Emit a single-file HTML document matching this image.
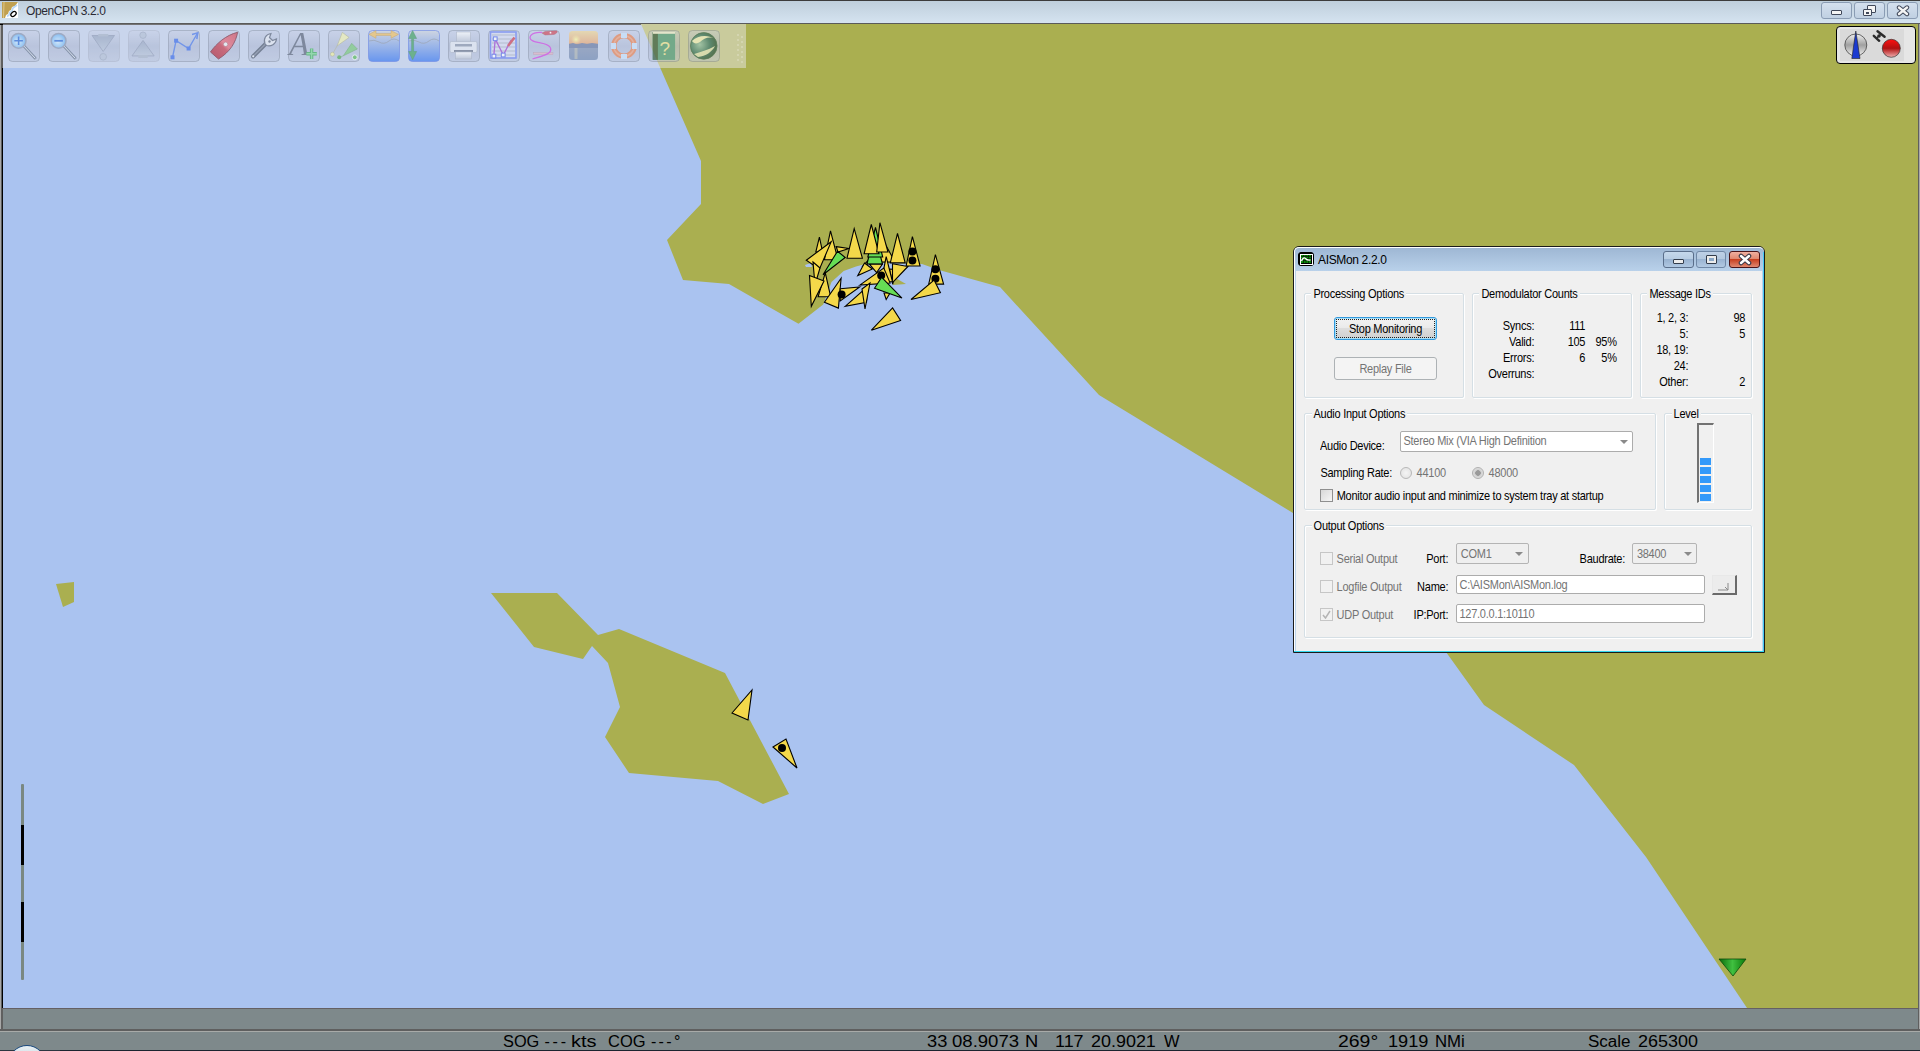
<!DOCTYPE html>
<html><head><meta charset="utf-8">
<style>
*{margin:0;padding:0;box-sizing:border-box}
html,body{width:1920px;height:1051px;overflow:hidden;background:#7e898b;font-family:"Liberation Sans",sans-serif}
.a{position:absolute}
#title{left:0;top:0;width:1920px;height:24px;background:linear-gradient(#bfcfdc,#d6e4f1);border-top:1px solid #3c3c3c}
#title .t{left:26px;top:3px;font-size:12px;color:#2a2a34;letter-spacing:-0.4px}
svg{position:absolute;left:0;top:0}
.st{font-size:16px;color:#000;top:1033px;white-space:pre;transform:scaleX(1.12);transform-origin:0 0}
.dl{font-size:11px;letter-spacing:-0.26px;color:#000;white-space:pre;line-height:13px;transform:scaleY(1.12);transform-origin:0 10px}
.gb{position:absolute;border:1px solid #d5dfe5;border-radius:2px;box-shadow:inset 1px 1px 0 #fff,1px 1px 0 #fff}
.gt{position:absolute;background:#f0f0f0;padding:0 2px 0 1px;top:-8px;left:7px}
.gray{color:#747474}
</style></head><body>

<!-- title bar -->
<div id="title" class="a">
  <svg class="a" style="left:2px;top:1px" width="16" height="16"><rect width="16" height="16" fill="#fff"/><path d="M0 0 H16 L14.5 2 L13 4 L10 5 L9 8 L7 9 L6 12 L4 13 L3 16 H0 Z" fill="#c0a050"/><path d="M2 0 L1.5 16" stroke="#f0e0b0" stroke-width="1" opacity="0.6"/><path d="M15 3 L11 6 L10 9 L8 10 L7 13 L5 14.5" stroke="#b8d8f8" stroke-width="1.6" fill="none"/><ellipse cx="11.5" cy="12" rx="3" ry="2" transform="rotate(-40 11.5 12)" fill="none" stroke="#000" stroke-width="1.3"/></svg>
  <div class="a t">OpenCPN 3.2.0</div>
</div>

<!-- map -->
<svg width="1920" height="1051" viewBox="0 0 1920 1051">
  <rect x="0" y="23" width="1920" height="1" fill="#5a5a5a"/>
  <rect x="0" y="24" width="1920" height="985" fill="#a8a8a8"/><rect x="1" y="24" width="2" height="985" fill="#5f5f5f"/><rect x="1918" y="24" width="1" height="985" fill="#5f5f5f"/>
  <rect x="3" y="25" width="1915" height="983" fill="#aac3f0"/>
  <rect x="2" y="68" width="1" height="940" fill="#000"/>
  <rect x="0" y="24" width="641" height="1" fill="#000"/>
  <polygon fill="#aaaf50" points="641,24 1918,24 1918,1008 1747,1008 1646,857 1574,765 1484,705 1446,652 1293,513 1099,395 1000,287 939,270 922,264 871,262.6 856,266.4 843.7,271 831.5,282 823.2,304.5 798.5,323.8 729,284 683,280 667,240 701,204 701,161"/>
  <polygon fill="#aaaf50" points="491,593 557,593 598,635 619,629 725,673 789,794 763,804 718,781 629,773 605,737 620,707 608,663 592,646 583,659 534,647"/>
  <polygon fill="#aaaf50" points="56,584 74,582 74,602 63,607"/>
</svg>
<svg class="a" style="left:0;top:0" width="1920" height="1051" viewBox="0 0 1920 1051">
<polygon points="805,265 811,263 812,267 806,267" fill="#aac3f0"/><polygon points="892,276 906,284 893,285" fill="#aaaf50"/>
<polygon points="819.4,237.2 815.8,252 822.6,252" fill="#f4d84a" stroke="#000" stroke-width="1.1" stroke-linejoin="miter"/>
<polygon points="836.2,246.6 849,248.5 838,252" fill="#f4d84a" stroke="#000" stroke-width="1.1" stroke-linejoin="miter"/>
<polygon points="830.5,230.8 824.4,259.8 838,259.8" fill="#f4d84a" stroke="#000" stroke-width="1.1" stroke-linejoin="miter"/>
<polygon points="854.2,228.6 847,258.2 862.4,258.2" fill="#f4d84a" stroke="#000" stroke-width="1.1" stroke-linejoin="miter"/>
<polygon points="862,267 871,262 876,252" fill="#f4d84a" stroke="#000" stroke-width="1.1" stroke-linejoin="miter"/>
<polygon points="883,240 878,262 895,262" fill="#f4d84a" stroke="#000" stroke-width="1.1" stroke-linejoin="miter"/>
<polygon points="874.5,233 867,264 882.5,264" fill="#66dd55" stroke="#000" stroke-width="1.1" stroke-linejoin="miter"/>
<polygon points="875.5,227.5 867.8,257 882.7,257" fill="#66dd55" stroke="#000" stroke-width="1.1" stroke-linejoin="miter"/>
<polygon points="871.3,224.5 864.1,253.8 879,253.8" fill="#f4d84a" stroke="#000" stroke-width="1.1" stroke-linejoin="miter"/>
<polygon points="879.9,222.7 876.7,252 888,252" fill="#f4d84a" stroke="#000" stroke-width="1.1" stroke-linejoin="miter"/>
<polygon points="806.3,260.2 831.2,241.7 819.4,269.2" fill="#f4d84a" stroke="#000" stroke-width="1.1" stroke-linejoin="miter"/>
<polygon points="837.5,251.2 845.2,257.5 823,274.7" fill="#66dd55" stroke="#000" stroke-width="1.1" stroke-linejoin="miter"/>
<polygon points="813,262 820,268 815,285" fill="#f4d84a" stroke="#000" stroke-width="1.1" stroke-linejoin="miter"/>
<polygon points="818.1,296.8 830.7,296.8 825.3,272.9" fill="#f4d84a" stroke="#000" stroke-width="1.1" stroke-linejoin="miter"/>
<polygon points="809.5,275.6 824,281 811.3,306.3" fill="#f4d84a" stroke="#000" stroke-width="1.1" stroke-linejoin="miter"/>
<polygon points="857.8,275.5 864.5,263 872.4,269" fill="#f4d84a" stroke="#000" stroke-width="1.1" stroke-linejoin="miter"/>
<polygon points="869.5,264.2 882.3,264.3 876.6,272.5" fill="#f4d84a" stroke="#000" stroke-width="1.1" stroke-linejoin="miter"/>
<polygon points="889.5,269 894.7,269.5 892.8,284.3" fill="#f4d84a" stroke="#000" stroke-width="1.1" stroke-linejoin="miter"/>
<polygon points="897.5,233.5 890.3,262.9 905.2,262.9" fill="#f4d84a" stroke="#000" stroke-width="1.1" stroke-linejoin="miter"/>
<polygon points="912.4,236.7 906.1,266 920.1,266" fill="#f4d84a" stroke="#000" stroke-width="1.1" stroke-linejoin="miter"/>
<circle cx="912.4" cy="251.6" r="4" fill="#000"/>
<circle cx="912.4" cy="260.6" r="4" fill="#000"/>
<polygon points="892.5,263.8 907.9,266.5 892.5,282.7" fill="#f4d84a" stroke="#000" stroke-width="1.1" stroke-linejoin="miter"/>
<polygon points="886.2,256.6 881.2,281.8 892.5,281.8" fill="#f4d84a" stroke="#000" stroke-width="1.1" stroke-linejoin="miter"/>
<polygon points="859.8,285.1 883.8,268 890.1,283.1" fill="#f4d84a" stroke="#000" stroke-width="1.1" stroke-linejoin="miter"/>
<circle cx="881.2" cy="275.5" r="4" fill="#000"/>
<polygon points="824.4,302.2 841.1,278.3 838.4,308.1" fill="#f4d84a" stroke="#000" stroke-width="1.1" stroke-linejoin="miter"/>
<polygon points="840.2,288.7 859.7,286.9 840.2,300.9" fill="#f4d84a" stroke="#000" stroke-width="1.1" stroke-linejoin="miter"/>
<circle cx="841.6" cy="294.6" r="4" fill="#000"/>
<polygon points="845.2,306.3 867.8,286.4 866.5,302.2" fill="#f4d84a" stroke="#000" stroke-width="1.1" stroke-linejoin="miter"/>
<polygon points="862,289 870,283 865,309" fill="#f4d84a" stroke="#000" stroke-width="1.1" stroke-linejoin="miter"/>
<polygon points="886.2,299.5 884,293 890,293" fill="#f4d84a" stroke="#000" stroke-width="1.1" stroke-linejoin="miter"/>
<polygon points="874.5,288.2 881.7,277.3 902,298.1" fill="#66dd55" stroke="#000" stroke-width="1.1" stroke-linejoin="miter"/>
<polygon points="935.4,254.7 928.7,284.1 943.6,284.1" fill="#f4d84a" stroke="#000" stroke-width="1.1" stroke-linejoin="miter"/>
<circle cx="935.4" cy="269.2" r="4" fill="#000"/>
<circle cx="935.4" cy="278.7" r="4" fill="#000"/>
<polygon points="911,299.5 934.1,280 940.4,292.7" fill="#f4d84a" stroke="#000" stroke-width="1.1" stroke-linejoin="miter"/>
<polygon points="871.4,330.2 892.6,307.9 900.6,320.5" fill="#f4d84a" stroke="#000" stroke-width="1.1" stroke-linejoin="miter"/>
<polygon points="732,713 752,690 748,720" fill="#f4d84a" stroke="#000" stroke-width="1.1" stroke-linejoin="miter"/>
<polygon points="773,747 786,739 797,768" fill="#f4d84a" stroke="#000" stroke-width="1.1" stroke-linejoin="miter"/>
<circle cx="782" cy="748" r="4" fill="#000"/>
<rect x="21" y="784" width="3" height="196" rx="1" fill="#7a8882"/><rect x="21" y="825" width="3" height="40" fill="#000"/><rect x="21" y="902" width="3" height="40" fill="#000"/>
<defs><linearGradient id="gm" x1="0" y1="0" x2="1" y2="0"><stop offset="0" stop-color="#0a6a0a"/><stop offset="0.5" stop-color="#40c040"/><stop offset="1" stop-color="#0a7a0a"/></linearGradient></defs>
<polygon points="1719,959 1746,959 1733,976" fill="url(#gm)" stroke="#0a4a0a" stroke-width="0.8"/>
</svg>
<div class="a" style="left:3px;top:24px;width:743px;height:44px;opacity:0.5"><div class="a" style="left:0;top:0;width:743px;height:44px;background:#e8e8e8"></div></div>
<svg class="a" style="left:0;top:0;opacity:0.68" width="760" height="70" viewBox="0 0 760 70"><defs>
<linearGradient id="btn" x1="0" y1="0" x2="0" y2="1"><stop offset="0" stop-color="#c8d0e4"/><stop offset="0.5" stop-color="#a0aac4"/><stop offset="1" stop-color="#b4bed4"/></linearGradient>
<radialGradient id="lens" cx="0.45" cy="0.55" r="0.6"><stop offset="0" stop-color="#d8f0ff"/><stop offset="1" stop-color="#5aa8f0"/></radialGradient>
<linearGradient id="gray3" x1="0" y1="0" x2="0" y2="1"><stop offset="0" stop-color="#98a6c0"/><stop offset="1" stop-color="#b8c4d8"/></linearGradient>
<linearGradient id="water" x1="0" y1="0" x2="0" y2="1"><stop offset="0" stop-color="#d0d4dc"/><stop offset="1" stop-color="#3a78f0"/></linearGradient>
<linearGradient id="boat" x1="0" y1="1" x2="1" y2="0"><stop offset="0" stop-color="#a82030"/><stop offset="0.45" stop-color="#c83848"/><stop offset="0.55" stop-color="#e86878"/><stop offset="1" stop-color="#d04858"/></linearGradient>
<linearGradient id="sky" x1="0" y1="0" x2="0" y2="1"><stop offset="0" stop-color="#f0d898"/><stop offset="0.42" stop-color="#e8a878"/><stop offset="0.5" stop-color="#505a78"/><stop offset="0.6" stop-color="#8090b0"/><stop offset="1" stop-color="#7088b0"/></linearGradient>
<radialGradient id="sun" cx="0.5" cy="0.5" r="0.5"><stop offset="0" stop-color="#ffffa0"/><stop offset="1" stop-color="#ffe890" stop-opacity="0"/></radialGradient>
<radialGradient id="globe" cx="0.35" cy="0.45" r="0.7"><stop offset="0" stop-color="#90c0a8"/><stop offset="0.55" stop-color="#2a6a5a"/><stop offset="1" stop-color="#1a4020"/></radialGradient>
<linearGradient id="print" x1="0" y1="0" x2="0" y2="1"><stop offset="0" stop-color="#ffffff"/><stop offset="1" stop-color="#b8c0d0"/></linearGradient>
</defs>
<g transform="translate(8,30)"><rect x="0.5" y="0.5" width="31" height="31" rx="4" fill="url(#btn)" fill-opacity="0.55" stroke="#606878" stroke-width="1" stroke-opacity="0.45"/><line x1="15" y1="15" x2="27" y2="28" stroke="#6a7890" stroke-width="3" stroke-linecap="round"/><line x1="15" y1="15" x2="27" y2="28" stroke="#e0e8f0" stroke-width="1" stroke-linecap="round"/><circle cx="10.6" cy="10.8" r="7.4" fill="url(#lens)" stroke="#8a96b0" stroke-width="1.5"/><path d="M10.6 6.5 V15 M6.3 10.8 H14.9" stroke="#2a6ad8" stroke-width="1.6"/></g>
<g transform="translate(48,30)"><rect x="0.5" y="0.5" width="31" height="31" rx="4" fill="url(#btn)" fill-opacity="0.55" stroke="#606878" stroke-width="1" stroke-opacity="0.45"/><line x1="15" y1="15" x2="27" y2="28" stroke="#6a7890" stroke-width="3" stroke-linecap="round"/><line x1="15" y1="15" x2="27" y2="28" stroke="#e0e8f0" stroke-width="1" stroke-linecap="round"/><circle cx="10.6" cy="10.8" r="7.4" fill="url(#lens)" stroke="#8a96b0" stroke-width="1.5"/><path d="M6.3 10.8 H14.9" stroke="#2a6ad8" stroke-width="1.8"/></g>
<g transform="translate(88,30)"><rect x="0.5" y="0.5" width="31" height="31" rx="4" fill="url(#btn)" fill-opacity="0.6" stroke="#8a90a0" stroke-width="1" stroke-opacity="0.3"/><path d="M4 5.5 H26.5 L15.2 21.5 Z" fill="url(#gray3)" stroke="#8a96b0" stroke-width="0.8"/><rect x="10" y="4" width="10.5" height="2.5" rx="1" fill="#a8b4c8"/><circle cx="15.2" cy="26.8" r="3.3" fill="#b4c0d4" stroke="#9aa6bc" stroke-width="0.8"/></g>
<g transform="translate(128,30)"><rect x="0.5" y="0.5" width="31" height="31" rx="4" fill="url(#btn)" fill-opacity="0.6" stroke="#8a90a0" stroke-width="1" stroke-opacity="0.3"/><path d="M4 25.9 H26.1 L15 10.4 Z" fill="url(#gray3)" stroke="#8a96b0" stroke-width="0.8"/><rect x="10" y="25" width="10" height="3" rx="1" fill="#a8b4c8"/><circle cx="15" cy="5.2" r="3.2" fill="#b4c0d4" stroke="#9aa6bc" stroke-width="0.8"/></g>
<g transform="translate(168,30)"><rect x="0.5" y="0.5" width="31" height="31" rx="4" fill="url(#btn)" fill-opacity="0.55" stroke="#606878" stroke-width="1" stroke-opacity="0.45"/><path d="M4.5 27.3 L8.1 10.7 L20.6 18.5 L29 4" stroke="#4a78e8" stroke-width="1.4" fill="none"/><path d="M24 4.5 L29.8 2.8 L28.8 9" stroke="#4a78e8" stroke-width="1.6" fill="none"/><rect x="2.5" y="25.3" width="4" height="4" fill="#3a6ae8"/><rect x="6.1" y="8.7" width="4" height="4" fill="#3a6ae8"/><rect x="18.6" y="16.5" width="4" height="4" fill="#3a6ae8"/></g>
<g transform="translate(208,30)"><rect x="0.5" y="0.5" width="31" height="31" rx="4" fill="url(#btn)" fill-opacity="0.55" stroke="#606878" stroke-width="1" stroke-opacity="0.45"/><path d="M2.5 22 C8 14 18 5 29.6 2.3 C28 12 22 22 10.5 29 Z" fill="url(#boat)" stroke="#702030" stroke-width="0.9"/><circle cx="17.6" cy="14.3" r="2.2" fill="#f0f0f0" stroke="#a04050" stroke-width="0.5"/></g>
<g transform="translate(248,30)"><rect x="0.5" y="0.5" width="31" height="31" rx="4" fill="url(#btn)" fill-opacity="0.55" stroke="#606878" stroke-width="1" stroke-opacity="0.45"/><path d="M5 26.5 L20 11.5" stroke="#505a6e" stroke-width="4" stroke-linecap="round"/><path d="M5.5 26 L19.5 12" stroke="#9aa4b8" stroke-width="1" stroke-linecap="round"/><circle cx="5.2" cy="26.3" r="1.1" fill="#e8ecf4"/><path d="M17 14 C15 9 18 4 23 3.5 L21.5 7.5 L24.5 10.5 L28.5 9 C28 14 23 17 18.5 15.5 Z" fill="#e4e8f0" stroke="#5a6478" stroke-width="1.2"/><circle cx="21.5" cy="11.5" r="1.2" fill="#5a6478"/></g>
<g transform="translate(288,30)"><rect x="0.5" y="0.5" width="31" height="31" rx="4" fill="url(#btn)" fill-opacity="0.55" stroke="#606878" stroke-width="1" stroke-opacity="0.45"/><text x="1" y="24.8" font-family="Liberation Serif" font-style="italic" font-size="33" fill="#5a6478">A</text><path d="M23.6 18.5 V29 M18.4 23.7 H28.8" stroke="#3aa858" stroke-width="3.4"/><path d="M23.6 18.5 V29 M18.4 23.7 H28.8" stroke="#7ad890" stroke-width="1.4"/></g>
<g transform="translate(328,30)"><rect x="0.5" y="0.5" width="31" height="31" rx="4" fill="url(#btn)" fill-opacity="0.55" stroke="#606878" stroke-width="1" stroke-opacity="0.45"/><path d="M4.4 24.2 L9.1 15.9 L14.3 2.3 L21.1 7.5 L9.1 15.9" fill="#f0f0b0" stroke="#a8a880" stroke-width="0.6"/><path d="M11.2 27.3 L15.3 25.8 L23.7 13.3 L29.4 19 L15.3 25.8" fill="#78c878" stroke="#60a060" stroke-width="0.6"/><circle cx="4.4" cy="24.2" r="2" fill="#f0f0a0" stroke="#a0a070" stroke-width="0.5"/><circle cx="11.2" cy="27.3" r="2" fill="#50a850"/><circle cx="26.8" cy="27.3" r="2.4" fill="#58b858" stroke="#fff" stroke-width="0.8"/></g>
<g transform="translate(368,30)"><rect x="0.5" y="0.5" width="31" height="31" rx="4" fill="url(#water)" stroke="#5070e0" stroke-width="1" stroke-opacity="0.7"/><path d="M1 11 Q6 9 11 12 T21 11 T31 11" stroke="#8890a0" stroke-width="0.8" fill="none"/><path d="M1 4.4 L8 0.5 V3.4 H23 V0.5 L30.5 4.4 L23 8.3 V5.4 H8 V8.3 Z" fill="#f0c060" stroke="#c09040" stroke-width="0.5"/></g>
<g transform="translate(408,30)"><rect x="0.5" y="0.5" width="31" height="31" rx="4" fill="url(#water)" stroke="#5070e0" stroke-width="1" stroke-opacity="0.7"/><path d="M1 11 Q6 9 11 12 T21 11 T31 11" stroke="#8890a0" stroke-width="0.8" fill="none"/><path d="M4.6 0.5 L8.6 8.5 H5.6 V21.5 H8.6 L4.6 29.8 L0.6 21.5 H3.6 V8.5 H0.6 Z" fill="#40a060" stroke="#308050" stroke-width="0.5"/></g>
<g transform="translate(448,30)"><rect x="0.5" y="0.5" width="31" height="31" rx="4" fill="url(#btn)" fill-opacity="0.55" stroke="#606878" stroke-width="1" stroke-opacity="0.45"/><rect x="8.5" y="2" width="14" height="10" fill="url(#print)" stroke="#a0a8b8" stroke-width="0.6"/><rect x="2" y="11.5" width="27" height="11" rx="1.5" fill="#e4e8f0" stroke="#a0a8b8" stroke-width="0.6"/><rect x="7" y="14" width="17" height="2.5" fill="#8a94a8"/><rect x="6" y="20" width="19" height="2" fill="#6a7488"/><rect x="7.5" y="22" width="16" height="7" fill="url(#print)" stroke="#a0a8b8" stroke-width="0.6"/></g>
<g transform="translate(488,30)"><rect x="0.5" y="0.5" width="31" height="31" rx="4" fill="url(#btn)" fill-opacity="0.55" stroke="#606878" stroke-width="1" stroke-opacity="0.45"/><rect x="2.5" y="2" width="25.5" height="26" fill="#d8dcf0" stroke="#6a80f0" stroke-width="1.6"/><path d="M4 5 H27 M4 9 H27 M4 13 H27 M4 17 H27 M4 21 H27 M4 25 H27" stroke="#a8b0c0" stroke-width="1"/><path d="M5.8 26.2 L7.2 8.9 L15.3 25.1 L23 10" stroke="#a040d0" stroke-width="1.3" fill="none"/><path d="M20 16 L26.5 7.5" stroke="#d04050" stroke-width="2.5"/><rect x="5.3" y="6.9" width="3.8" height="3.8" fill="#fff" stroke="#4a60e8" stroke-width="1"/><rect x="13.3" y="23.1" width="3.8" height="3.8" fill="#fff" stroke="#4a60e8" stroke-width="1"/><rect x="4" y="24.2" width="3.8" height="3.8" fill="#fff" stroke="#4a60e8" stroke-width="1"/></g>
<g transform="translate(528,30)"><rect x="0.5" y="0.5" width="31" height="31" rx="4" fill="url(#btn)" fill-opacity="0.55" stroke="#606878" stroke-width="1" stroke-opacity="0.45"/><rect x="5.5" y="22.5" width="19.5" height="2.2" fill="#e0b0c0" stroke="#b090a0" stroke-width="0.4"/><path d="M4.5 29 C14 26 26 24 22 17 C18 11 3 14 2 8 C2 3 10 2 14 2.5" stroke="#d040e0" stroke-width="1.3" fill="none"/><path d="M14 3 L17 1.5 L28.5 0.8 C30 1.5 29 3.5 26 4.5 L17 5 Z" fill="#d04858" stroke="#a03040" stroke-width="0.4"/><circle cx="22.5" cy="2.7" r="0.9" fill="#fff"/></g>
<g transform="translate(568,30)"><rect x="1" y="1" width="29" height="29" rx="3.5" fill="url(#sky)"/><circle cx="8" cy="9.5" r="5" fill="url(#sun)"/><path d="M1 14 L5 13 L9 14.5 L14 13 L19 14 L24 13 L30 14 V18 H1 Z" fill="#6878a0"/><path d="M8 18 V29" stroke="#e0d8b0" stroke-width="3" stroke-opacity="0.45"/></g>
<g transform="translate(608,30)"><rect x="0.5" y="0.5" width="31" height="31" rx="4" fill="url(#btn)" fill-opacity="0.55" stroke="#606878" stroke-width="1" stroke-opacity="0.45"/><circle cx="16" cy="15.9" r="10.2" fill="none" stroke="#e88050" stroke-width="5.3"/><circle cx="16" cy="15.9" r="10.2" fill="none" stroke="#fff" stroke-opacity="0.25" stroke-width="1.5"/><rect x="13" y="3" width="6" height="5" fill="#c8e0fa"/><rect x="13" y="24" width="6" height="5" fill="#c8e0fa"/><rect x="3" y="13" width="5" height="6" fill="#c8e0fa"/><rect x="24" y="13" width="5" height="6" fill="#c8e0fa"/></g>
<g transform="translate(648,30)"><rect x="0.5" y="0.5" width="31" height="31" rx="4" fill="url(#btn)" fill-opacity="0.55" stroke="#606878" stroke-width="1" stroke-opacity="0.45"/><rect x="4.7" y="2.3" width="22.4" height="27.6" fill="#4a9a80"/><rect x="4.7" y="2.3" width="5.2" height="27.6" fill="#30583a"/><rect x="5" y="2" width="22" height="1.8" fill="#f0f0e0"/><text x="11.5" y="25" font-family="Liberation Sans" font-size="19" fill="#f0e8a8">?</text></g>
<g transform="translate(688,30)"><rect x="0.5" y="0.5" width="31" height="31" rx="4" fill="url(#btn)" fill-opacity="0.55" stroke="#606878" stroke-width="1" stroke-opacity="0.45"/><circle cx="15.75" cy="15.9" r="13.3" fill="url(#globe)" stroke="#2a5a3a" stroke-width="0.8"/><path d="M4 11 C10 6 18 4 27 9 C22 6 16 8 12 12 C9 14 6 14 4 11 Z" fill="#f0f0c0"/><path d="M6 24 C12 22 20 20 27 16 C24 22 18 26 10 27 Z" fill="#f0f0c0" fill-opacity="0.9"/></g>
<rect x="737" y="34" width="2" height="2" fill="#fff" fill-opacity="0.3"/><rect x="741" y="36" width="2" height="2" fill="#fff" fill-opacity="0.3"/>
<rect x="737" y="39" width="2" height="2" fill="#fff" fill-opacity="0.3"/><rect x="741" y="41" width="2" height="2" fill="#fff" fill-opacity="0.3"/>
<rect x="737" y="44" width="2" height="2" fill="#fff" fill-opacity="0.3"/><rect x="741" y="46" width="2" height="2" fill="#fff" fill-opacity="0.3"/>
<rect x="737" y="49" width="2" height="2" fill="#fff" fill-opacity="0.3"/><rect x="741" y="51" width="2" height="2" fill="#fff" fill-opacity="0.3"/>
<rect x="737" y="54" width="2" height="2" fill="#fff" fill-opacity="0.3"/><rect x="741" y="56" width="2" height="2" fill="#fff" fill-opacity="0.3"/>
<rect x="737" y="59" width="2" height="2" fill="#fff" fill-opacity="0.3"/><rect x="741" y="61" width="2" height="2" fill="#fff" fill-opacity="0.3"/>
</svg>

<!-- status -->
<div class="a" style="left:0;top:1008px;width:1920px;height:22px;background:#a8a8a8"></div><div class="a" style="left:1px;top:1008px;width:1918px;height:22px;background:#7e898b;border-left:2px solid #5f5f5f;border-right:1px solid #5f5f5f;border-top:1px solid #646064"></div>
<div class="a" style="left:0;top:1029px;width:1920px;height:2px;background:#5f5f5f"></div>
<div class="a" style="left:0;top:1031px;width:1920px;height:1px;background:#a8aaa8"></div>
<div class="a" style="left:0;top:1050px;width:1920px;height:1px;background:#2c3640"></div>

<div class="a st" style="left:503.4px;transform:scaleX(1.021)">SOG</div>
<div class="a st" style="left:544.6px;transform:none;letter-spacing:2.7px">---</div>
<div class="a st" style="left:571.2px;transform:scaleX(1.25)">kts</div>
<div class="a st" style="left:608.4px;transform:scaleX(1.029)">COG</div>
<div class="a st" style="left:650.9px;transform:none;letter-spacing:2.37px">---°</div>
<div class="a st" style="left:926.9px;transform:scaleX(1.141)">33</div>
<div class="a st" style="left:952.3px;transform:scaleX(1.159)">08.9073</div>
<div class="a st" style="left:1024.6px;transform:scaleX(1.144)">N</div>
<div class="a st" style="left:1055.3px;transform:scaleX(1.121)">117</div>
<div class="a st" style="left:1090.9px;transform:scaleX(1.121)">20.9021</div>
<div class="a st" style="left:1163.5px;transform:scaleX(1.027)">W</div>
<div class="a st" style="left:1337.7px;transform:scaleX(1.213)">269°</div>
<div class="a st" style="left:1388.3px;transform:scaleX(1.135)">1919</div>
<div class="a st" style="left:1434.9px;transform:scaleX(1.048)">NMi</div>
<div class="a st" style="left:1588.2px;transform:scaleX(1.064)">Scale</div>
<div class="a st" style="left:1637.6px;transform:scaleX(1.123)">265300</div>


<!-- window buttons -->
<div class="a" style="left:1821px;top:2px;width:31px;height:17px;border:1px solid #8a9cb4;border-radius:3px;background:linear-gradient(#d4e0ee,#c0d0e2)"></div>
<div class="a" style="left:1831px;top:10px;width:11px;height:5px;border:1px solid #40485a;border-radius:1px;background:#f4f4f4"></div>
<div class="a" style="left:1854px;top:2px;width:31px;height:17px;border:1px solid #8a9cb4;border-radius:3px;background:linear-gradient(#d4e0ee,#c0d0e2)"></div>
<div class="a" style="left:1867px;top:5px;width:9px;height:8px;border:1px solid #40485a;border-radius:1px;background:#f4f4f4"></div>
<div class="a" style="left:1863px;top:9px;width:9px;height:7px;border:1px solid #40485a;border-radius:1px;background:#f4f4f4"></div>
<div class="a" style="left:1866px;top:12px;width:3px;height:2px;background:#40485a"></div>
<div class="a" style="left:1887px;top:2px;width:31px;height:17px;border:1px solid #8a9cb4;border-radius:3px;background:linear-gradient(#d4e0ee,#c0d0e2)"></div>
<svg class="a" style="left:1895px;top:4px" width="16" height="13"><path d="M4 3.5 L12 10 M12 3.5 L4 10" stroke="#40485a" stroke-width="4.4" stroke-linecap="round"/><path d="M4 3.5 L12 10 M12 3.5 L4 10" stroke="#f4f4f4" stroke-width="2.4" stroke-linecap="round"/></svg>
<!-- compass widget -->
<div class="a" style="left:1836px;top:26px;width:80px;height:38px;border:1.5px solid #000;border-radius:4px;background:#e6e6e6"></div>
<div class="a" style="left:1840px;top:29px;width:64px;height:32px;background:#dadada"></div>
<svg class="a" style="left:1836px;top:26px" width="80" height="38">
<defs><linearGradient id="cg" x1="0" y1="0" x2="0" y2="1"><stop offset="0" stop-color="#f0f0f0"/><stop offset="0.5" stop-color="#a0a0a0"/><stop offset="1" stop-color="#f0f0f0"/></linearGradient>
<linearGradient id="rg" x1="0" y1="0" x2="0" y2="1"><stop offset="0" stop-color="#ff1010"/><stop offset="0.5" stop-color="#b01010"/><stop offset="1" stop-color="#f0b0b0"/></linearGradient></defs>
<circle cx="19.8" cy="19" r="11" fill="url(#cg)" stroke="#333" stroke-width="0.7"/>
<path d="M19.8 5 L24 32.5 L15.8 32.5 Z" fill="#1a3ad0" stroke="#222" stroke-width="0.6"/>
<circle cx="55.3" cy="22.3" r="9" fill="url(#rg)" stroke="#333" stroke-width="0.7"/>
<path d="M37.8 9.8 L43.2 14.8 M41.5 5.3 L48.6 10.7" stroke="#2a2a2a" stroke-width="2.4" stroke-linecap="round"/><path d="M40.5 12.3 L45 8" stroke="#2a2a2a" stroke-width="1.2"/><circle cx="43" cy="10" r="1.8" fill="#2a2a2a"/>
</svg>
<!-- start orb -->
<div class="a" style="left:8px;top:1045px;width:38px;height:38px;border:1px solid #1a4a80;border-radius:50%;background:linear-gradient(#e8f0f4,#9ab4c4)"></div>
<div class="a" style="left:60px;top:1050px;width:1860px;height:1px;background:#1c2430"></div>
<div class="a" style="left:1293px;top:246px;width:472px;height:407px;border:1px solid #1a1a1a;border-radius:6px 6px 0 0;background:linear-gradient(#9db6d3 0,#b9d1ea 24px,#bcd4ec 100%)"></div>
<div class="a" style="left:1294px;top:247px;width:470px;height:405px;border:1px solid #fff;border-radius:5px 5px 0 0;border-bottom:none;border-right:none"></div>
<div class="a" style="left:1296px;top:271px;width:466px;height:380px;background:#f0f0f0"></div>
<div class="a" style="left:1763px;top:252px;width:1px;height:400px;background:#44c7f4"></div>
<div class="a" style="left:1294px;top:651px;width:470px;height:1px;background:#30d8f0"></div>
<div class="a" style="left:1298px;top:252px;width:16px;height:14px;border:1.5px solid #000;border-radius:3px;background:#000"></div>
<div class="a" style="left:1299.5px;top:253.5px;width:13px;height:11px;border:1px solid #fff;background:#000"></div>
<svg class="a" style="left:1301px;top:254.8px" width="10" height="8"><rect x="0" y="0" width="10" height="8" fill="#0a8a0a"/><path d="M0 1.5 H10 M0 3.5 H10 M0 5.5 H10 M2.5 0 V8 M5 0 V8 M7.5 0 V8" stroke="#000" stroke-width="0.8" opacity="0.7"/><path d="M0.5 6 Q2.5 1.5 4.5 3.5 Q6 5.5 9.5 5" stroke="#fff" stroke-width="1.3" fill="none"/></svg>
<div class="a" style="left:1318px;top:252.7px;font-size:12px;color:#000;letter-spacing:-0.35px">AISMon 2.2.0</div>
<div class="a" style="left:1663px;top:251px;width:31px;height:17px;border:1px solid #5a6e8a;border-radius:3px;background:linear-gradient(#c5d8ec 0,#b8cde3 45%,#98b2d0 50%,#b0c8e2 100%)"></div>
<div class="a" style="left:1673px;top:259px;width:11px;height:5px;border:1px solid #333d4c;border-radius:1px;background:#ececec"></div>
<div class="a" style="left:1696px;top:251px;width:30px;height:17px;border:1px solid #7088a6;border-radius:3px;background:linear-gradient(#bdd0e6 0,#b3c8df 45%,#9ab4d2 50%,#b2c9e2 100%)"></div>
<div class="a" style="left:1706px;top:255px;width:11px;height:9px;border:1px solid #333d4c;border-radius:1px;background:#ececec"></div>
<div class="a" style="left:1709px;top:258px;width:5px;height:3px;background:#8aa8c8"></div>
<div class="a" style="left:1729px;top:251px;width:31px;height:17px;border:1px solid #4a1418;border-radius:3px;background:linear-gradient(#f0b0a0 0,#e08870 45%,#c84020 50%,#e08870 100%)"></div>
<svg class="a" style="left:1737px;top:253px" width="16" height="13"><path d="M4 3 L12 10 M12 3 L4 10" stroke="#3a3a4a" stroke-width="4.6" stroke-linecap="round"/><path d="M4 3 L12 10 M12 3 L4 10" stroke="#fff" stroke-width="2.4" stroke-linecap="round"/></svg>
<div class="gb" style="left:1304px;top:293px;width:160px;height:105px"></div>
<div class="gb" style="left:1472px;top:293px;width:160px;height:105px"></div>
<div class="gb" style="left:1640px;top:293px;width:112px;height:105px"></div>
<div class="gb" style="left:1304px;top:413px;width:352px;height:97px"></div>
<div class="gb" style="left:1664px;top:413px;width:88px;height:97px"></div>
<div class="gb" style="left:1304px;top:525px;width:448px;height:113px"></div>
<div class="a dl " style="left:1313.4px;top:288px;background:#f0f0f0;padding:0 2px;margin-left:-2px">Processing Options</div>
<div class="a dl " style="left:1481.4px;top:288px;background:#f0f0f0;padding:0 2px;margin-left:-2px">Demodulator Counts</div>
<div class="a dl " style="left:1649.4px;top:288px;background:#f0f0f0;padding:0 2px;margin-left:-2px">Message IDs</div>
<div class="a dl " style="left:1313.5px;top:408px;background:#f0f0f0;padding:0 2px;margin-left:-2px">Audio Input Options</div>
<div class="a dl " style="left:1673.6px;top:408px;background:#f0f0f0;padding:0 2px;margin-left:-2px">Level</div>
<div class="a dl " style="left:1313.6px;top:520px;background:#f0f0f0;padding:0 2px;margin-left:-2px">Output Options</div>
<div class="a" style="left:1334px;top:317px;width:103px;height:23px;border:1px solid #3399dd;border-radius:3px;background:linear-gradient(#f2f2f2 0,#ebebeb 45%,#dddddd 50%,#cfcfcf 100%);box-shadow:inset 0 0 0 1px #a6e0f8"></div>
<div class="a" style="left:1336px;top:319px;width:99px;height:19px;border:1px dotted #222"></div>
<div class="a dl " style="left:1325.5px;top:323px;width:120px;text-align:center">Stop Monitoring</div>
<div class="a" style="left:1334px;top:357px;width:103px;height:23px;border:1px solid #adb2b5;border-radius:3px;background:#f4f4f4"></div>
<div class="a dl gray" style="left:1325.5px;top:363px;width:120px;text-align:center">Replay File</div>
<div class="a dl " style="right:385.8px;top:320px;text-align:right;">Syncs:</div>
<div class="a dl " style="right:385.8px;top:336px;text-align:right;">Valid:</div>
<div class="a dl " style="right:385.8px;top:352px;text-align:right;">Errors:</div>
<div class="a dl " style="right:385.8px;top:368px;text-align:right;">Overruns:</div>
<div class="a dl " style="right:334.8px;top:320px;text-align:right;">111</div>
<div class="a dl " style="right:334.8px;top:336px;text-align:right;">105</div>
<div class="a dl " style="right:334.8px;top:352px;text-align:right;">6</div>
<div class="a dl " style="right:303.3px;top:336px;text-align:right;">95%</div>
<div class="a dl " style="right:303.3px;top:352px;text-align:right;">5%</div>
<div class="a dl " style="right:231.8px;top:312px;text-align:right;">1, 2, 3:</div>
<div class="a dl " style="right:231.8px;top:328px;text-align:right;">5:</div>
<div class="a dl " style="right:231.8px;top:344px;text-align:right;">18, 19:</div>
<div class="a dl " style="right:231.8px;top:360px;text-align:right;">24:</div>
<div class="a dl " style="right:231.8px;top:376px;text-align:right;">Other:</div>
<div class="a dl " style="right:174.8px;top:312px;text-align:right;">98</div>
<div class="a dl " style="right:174.8px;top:328px;text-align:right;">5</div>
<div class="a dl " style="right:174.8px;top:376px;text-align:right;">2</div>
<div class="a dl " style="left:1320px;top:440px;">Audio Device:</div>
<div class="a" style="left:1400px;top:431px;width:233px;height:21px;border:1px solid #acacac;border-radius:2px;background:#fff"></div>
<div class="a dl gray" style="left:1403.5px;top:435px;">Stereo Mix (VIA High Definition</div>
<svg class="a" style="left:1619px;top:439px" width="10" height="6"><path d="M1 1 L9 1 L5 5 Z" fill="#8a8a8a"/></svg>
<div class="a dl " style="left:1320.4px;top:467px;">Sampling Rate:</div>
<div class="a" style="left:1400px;top:467px;width:12px;height:12px;border:1px solid #b8b8b8;border-radius:50%;background:radial-gradient(#f4f4f4,#e0e0e0)"></div>
<div class="a dl gray" style="left:1416.6px;top:467px;">44100</div>
<div class="a" style="left:1471.5px;top:466.8px;width:12px;height:12px;border:1px solid #b0b0b0;border-radius:50%;background:radial-gradient(circle,#9a9a9a 0 2.5px,#cfcfcf 3px,#eee 100%)"></div>
<div class="a dl gray" style="left:1488.6px;top:467px;">48000</div>
<div class="a" style="left:1320px;top:489px;width:13px;height:13px;border:1px solid #8f8f8f;background:linear-gradient(135deg,#d8d8d8,#f6f6f6)"></div>
<div class="a dl " style="left:1336.7px;top:490px;">Monitor audio input and minimize to system tray at startup</div>
<div class="a" style="left:1697px;top:423px;width:17px;height:80px;border:1px solid #fff;border-left:2px solid #727272;border-top:2px solid #727272;background:#f0f0f0"></div>
<div class="a" style="left:1700px;top:458px;width:11px;height:7px;background:#3399fa"></div>
<div class="a" style="left:1700px;top:467px;width:11px;height:7px;background:#3399fa"></div>
<div class="a" style="left:1700px;top:476px;width:11px;height:7px;background:#3399fa"></div>
<div class="a" style="left:1700px;top:485px;width:11px;height:7px;background:#3399fa"></div>
<div class="a" style="left:1700px;top:494px;width:11px;height:7px;background:#3399fa"></div>
<div class="a" style="left:1320px;top:552px;width:13px;height:13px;border:1px solid #c6c6c6;background:#f1f1f1"></div>
<div class="a" style="left:1320px;top:580px;width:13px;height:13px;border:1px solid #c6c6c6;background:#f1f1f1"></div>
<div class="a" style="left:1320px;top:608px;width:13px;height:13px;border:1px solid #c6c6c6;background:#f1f1f1"></div>
<svg class="a" style="left:1322px;top:610px" width="9" height="9"><path d="M1 5 L3.5 8 L8 1" stroke="#b4b4b4" stroke-width="1.5" fill="none"/></svg>
<div class="a dl gray" style="left:1336.6px;top:553px;">Serial Output</div>
<div class="a dl gray" style="left:1336.6px;top:581px;">Logfile Output</div>
<div class="a dl gray" style="left:1336.6px;top:609px;">UDP Output</div>
<div class="a dl " style="right:471.8px;top:553px;text-align:right;">Port:</div>
<div class="a dl " style="right:471.8px;top:581px;text-align:right;">Name:</div>
<div class="a dl " style="right:471.8px;top:609px;text-align:right;">IP:Port:</div>
<div class="a" style="left:1456px;top:543px;width:73px;height:21px;border:1px solid #b4b4b4;border-radius:2px;background:#efefef"></div>
<div class="a dl gray" style="left:1460.8px;top:548px;">COM1</div>
<svg class="a" style="left:1514px;top:551px" width="10" height="6"><path d="M1 1 L9 1 L5 5 Z" fill="#8a8a8a"/></svg>
<div class="a dl " style="left:1579.6px;top:553px;">Baudrate:</div>
<div class="a" style="left:1632px;top:543px;width:65px;height:21px;border:1px solid #b4b4b4;border-radius:2px;background:#efefef"></div>
<div class="a dl gray" style="left:1636.9px;top:548px;">38400</div>
<svg class="a" style="left:1683px;top:551px" width="10" height="6"><path d="M1 1 L9 1 L5 5 Z" fill="#8a8a8a"/></svg>
<div class="a" style="left:1456px;top:575px;width:249px;height:19px;border:1px solid #acacac;border-radius:2px;background:#fff"></div>
<div class="a dl gray" style="left:1459.5px;top:579px;">C:\AISMon\AISMon.log</div>
<div class="a" style="left:1456px;top:604px;width:249px;height:19px;border:1px solid #acacac;border-radius:2px;background:#fff"></div>
<div class="a dl gray" style="left:1459.5px;top:608px;">127.0.0.1:10110</div>
<div class="a" style="left:1712px;top:575px;width:25px;height:20px;border:1px solid #e8e8e8;border-right:2px solid #6a6a6a;border-bottom:2px solid #6a6a6a;background:#ececec"></div>
<svg class="a" style="left:1718px;top:582px" width="14" height="9"><path d="M0 8 H10 M10 8 V1 M7 5 L10 8" stroke="#8a8a8a" stroke-width="1" fill="none"/></svg>
</body></html>
